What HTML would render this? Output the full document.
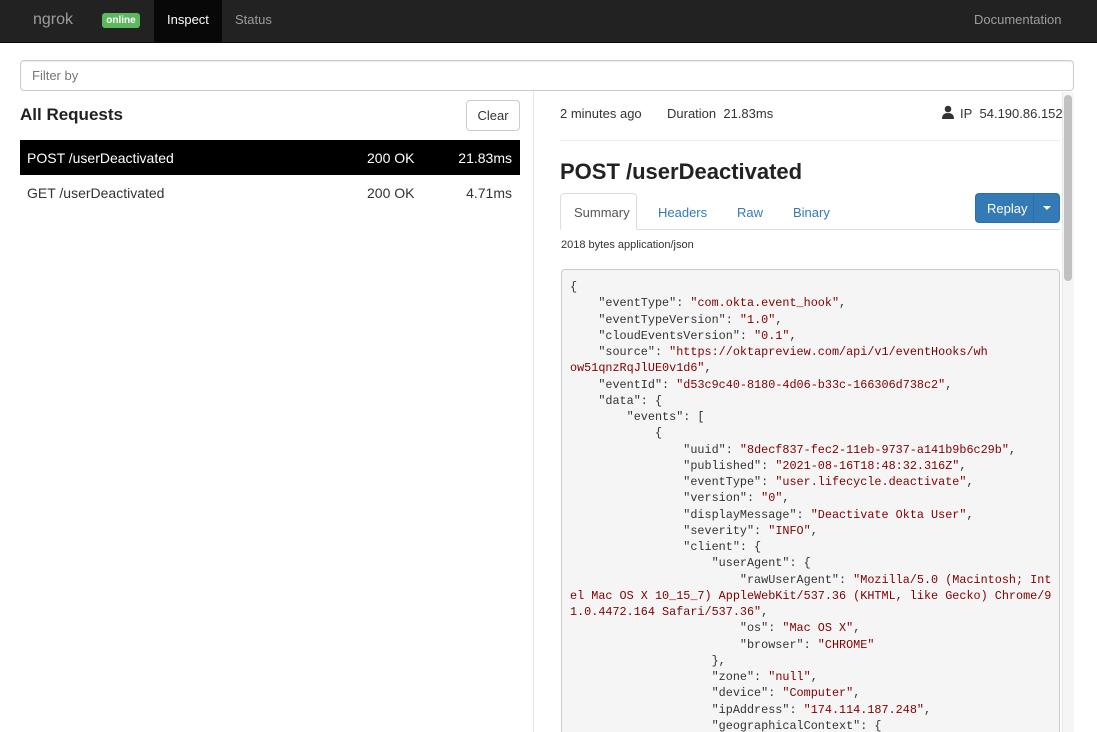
<!DOCTYPE html>
<html><head><meta charset="utf-8"><style>
*{box-sizing:border-box;margin:0;padding:0}
html,body{width:1097px;height:732px;overflow:hidden}
body{background:#fff;font-family:"Liberation Sans",sans-serif;color:#333;position:relative;font-size:14px}
.nav{position:absolute;left:0;top:0;width:1097px;height:43px;background:#222;border-bottom:1px solid #080808}
.nav span{position:absolute;top:12px;color:#9d9d9d;font-size:13px}
.abs{position:absolute}
pre{font-family:"Liberation Mono",monospace;font-size:11.8px;line-height:16.25px;color:#333;white-space:pre}
.s{color:#800000}
</style></head><body>
<div class="nav">
<span style="left:33px;font-size:16px;top:11px">ngrok</span>
<div class="abs" style="left:102px;top:13px;width:38px;height:15px;background:#5cb85c;border-radius:3px;color:#fff;font-size:10px;font-weight:bold;text-align:center;line-height:15px">online</div>
<div class="abs" style="left:154px;top:0;width:68px;height:43px;background:#080808"></div>
<span style="left:167px;color:#fff">Inspect</span>
<span style="left:235px">Status</span>
<span style="left:974px">Documentation</span>
</div>
<div class="abs" style="left:20px;top:60px;width:1054px;height:31px;border:1px solid #ccc;border-radius:4px;box-shadow:inset 0 1px 1px rgba(0,0,0,.075)"></div>
<div class="abs" style="left:32px;top:68px;font-size:13px;color:#777">Filter by</div>
<div class="abs" style="left:20px;top:105px;font-size:17px;font-weight:bold;color:#222">All Requests</div>
<div class="abs" style="left:466px;top:100px;width:54px;height:31px;border:1px solid #ccc;border-radius:4px;font-size:13px;text-align:center;line-height:29px">Clear</div>
<div class="abs" style="left:20px;top:140px;width:500px;height:35px;background:#000"></div>
<div class="abs" style="left:27px;top:150px;color:#fff">POST /userDeactivated</div>
<div class="abs" style="left:367px;top:150px;color:#fff">200 OK</div>
<div class="abs" style="left:512px;top:150px;color:#fff;transform:translateX(-100%)">21.83ms</div>
<div class="abs" style="left:27px;top:185px">GET /userDeactivated</div>
<div class="abs" style="left:367px;top:185px">200 OK</div>
<div class="abs" style="left:512px;top:185px;transform:translateX(-100%)">4.71ms</div>
<div class="abs" style="left:533px;top:91px;width:1px;height:641px;background:#e5e5e5"></div>
<div class="abs" style="left:1062px;top:92px;width:12px;height:640px;background:#f5f5f5;border-left:1px solid #e8e8e8"></div>
<div class="abs" style="left:1064px;top:95px;width:8px;height:186px;background:#c1c1c1;border-radius:4px"></div>
<div class="abs" style="left:560px;top:106px;font-size:13px">2 minutes ago</div>
<div class="abs" style="left:667px;top:106px;font-size:13px">Duration&nbsp; 21.83ms</div>
<svg class="abs" style="left:941px;top:105px" width="14" height="14" viewBox="0 0 14 14"><circle cx="7" cy="4" r="3.3" fill="#333"/><path d="M1 14 Q1 8 7 8 Q13 8 13 14Z" fill="#333"/></svg>
<div class="abs" style="left:960px;top:106px;font-size:13px">IP&nbsp; 54.190.86.152</div>
<div class="abs" style="left:560px;top:140px;width:500px;height:1px;background:#eee"></div>
<div class="abs" style="left:560px;top:159px;font-size:22px;font-weight:bold;color:#222">POST /userDeactivated</div>
<div class="abs" style="left:560px;top:229px;width:500px;height:1px;background:#ddd"></div>
<div class="abs" style="left:560px;top:193px;width:77px;height:37px;border:1px solid #ddd;border-bottom-color:#fff;border-radius:4px 4px 0 0;background:#fff"></div>
<div class="abs" style="left:574px;top:205px;font-size:13px;color:#555">Summary</div>
<div class="abs" style="left:658px;top:205px;font-size:13px;color:#337ab7">Headers</div>
<div class="abs" style="left:737px;top:205px;font-size:13px;color:#337ab7">Raw</div>
<div class="abs" style="left:793px;top:205px;font-size:13px;color:#337ab7">Binary</div>
<div class="abs" style="left:975px;top:193px;width:85px;height:30px;background:#337ab7;border:1px solid #2e6da4;border-radius:4px"></div>
<div class="abs" style="left:1033px;top:194px;width:1px;height:28px;background:#2e6da4"></div>
<div class="abs" style="left:987px;top:201px;font-size:13px;color:#fff">Replay</div>
<div class="abs" style="left:1043px;top:206px;border-left:4px solid transparent;border-right:4px solid transparent;border-top:4px solid #fff"></div>
<div class="abs" style="left:561px;top:239px;font-size:11px;color:#333">2018 bytes application/json</div>
<div class="abs" style="left:561px;top:269px;width:499px;height:470px;background:#f5f5f5;border:1px solid #ccc;border-radius:4px"></div>
<pre class="abs" style="left:570px;top:279px">{
    "eventType": <span class="s">"com.okta.event_hook"</span>,
    "eventTypeVersion": <span class="s">"1.0"</span>,
    "cloudEventsVersion": <span class="s">"0.1"</span>,
    "source": <span class="s">"https://oktapreview.com/api/v1/eventHooks/wh
ow51qnzRqJlUE0v1d6"</span>,
    "eventId": <span class="s">"d53c9c40-8180-4d06-b33c-166306d738c2"</span>,
    "data": {
        "events": [
            {
                "uuid": <span class="s">"8decf837-fec2-11eb-9737-a141b9b6c29b"</span>,
                "published": <span class="s">"2021-08-16T18:48:32.316Z"</span>,
                "eventType": <span class="s">"user.lifecycle.deactivate"</span>,
                "version": <span class="s">"0"</span>,
                "displayMessage": <span class="s">"Deactivate Okta User"</span>,
                "severity": <span class="s">"INFO"</span>,
                "client": {
                    "userAgent": {
                        "rawUserAgent": <span class="s">"Mozilla/5.0 (Macintosh; Int
el Mac OS X 10_15_7) AppleWebKit/537.36 (KHTML, like Gecko) Chrome/9
1.0.4472.164 Safari/537.36"</span>,
                        "os": <span class="s">"Mac OS X"</span>,
                        "browser": <span class="s">"CHROME"</span>
                    },
                    "zone": <span class="s">"null"</span>,
                    "device": <span class="s">"Computer"</span>,
                    "ipAddress": <span class="s">"174.114.187.248"</span>,
                    "geographicalContext": {</pre>
</body></html>
